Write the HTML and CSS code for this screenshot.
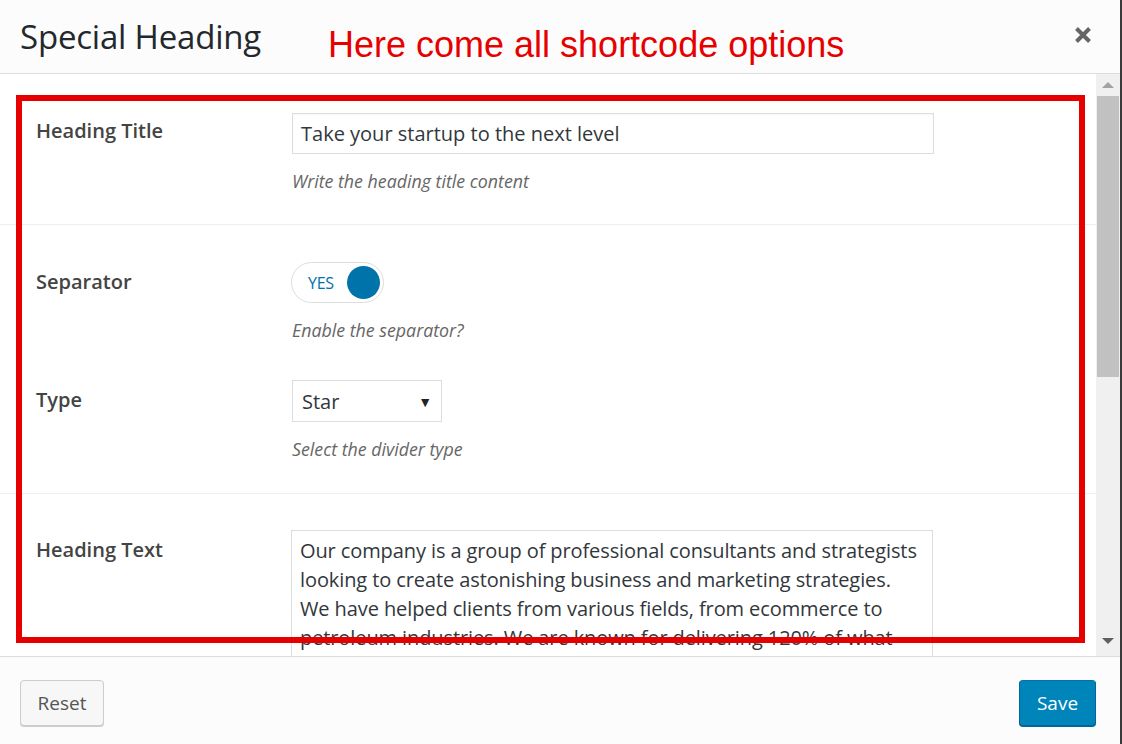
FILE: index.html
```html
<!DOCTYPE html>
<html>
<head>
<meta charset="utf-8">
<link rel="stylesheet" href="styles.css">
</head>
<body>
<div class="modal">
  <header class="modal-header">
    <h1 class="modal-title">Special Heading</h1>
    <span class="annotation-text">Here come all shortcode options</span>
    <button class="close-btn" aria-label="Close">
      <svg width="18" height="18" viewBox="0 0 18 18"><path d="M2.5 2.5 L15.5 15.5 M15.5 2.5 L2.5 15.5" stroke="#666" stroke-width="4" stroke-linecap="butt"/></svg>
    </button>
  </header>
  <div class="modal-body">
    <div class="content">
      <section class="section s1">
        <div class="field">
          <div class="field-label">Heading Title</div>
          <div class="field-control">
            <div class="text-input">Take your startup to the next level</div>
            <p class="desc">Write the heading title content</p>
          </div>
        </div>
      </section>
      <section class="section s2">
        <div class="field">
          <div class="field-label">Separator</div>
          <div class="field-control">
            <div class="toggle"><span class="toggle-text">YES</span><span class="toggle-knob"></span></div>
            <p class="desc">Enable the separator?</p>
          </div>
        </div>
        <div class="field field-type">
          <div class="field-label">Type</div>
          <div class="field-control">
            <div class="select"><span>Star</span><span class="select-arrow">&#9660;</span></div>
            <p class="desc">Select the divider type</p>
          </div>
        </div>
      </section>
      <section class="section s3">
        <div class="field">
          <div class="field-label">Heading Text</div>
          <div class="field-control">
            <div class="textarea">Our company is a group of professional consultants and strategists looking to create astonishing business and marketing strategies. We have helped clients from various fields, from ecommerce to petroleum industries. We are known for delivering 120% of what</div>
          </div>
        </div>
      </section>
    </div>
    <div class="scrollbar">
      <div class="sb-arrow sb-up"></div>
      <div class="sb-track"><div class="sb-thumb"></div></div>
      <div class="sb-arrow sb-down"></div>
    </div>
    <div class="annotation-box"></div>
  </div>
  <footer class="modal-footer">
    <button class="btn btn-reset">Reset</button>
    <button class="btn btn-save">Save</button>
  </footer>
</div>
</body>
</html>
```
FILE: styles.css
```css
* { box-sizing: border-box; }
html, body { margin: 0; padding: 0; }
body {
  background: #3a3a3a;
  font-family: "Open Sans", "Noto Sans", sans-serif;
  width: 1122px;
  height: 744px;
  overflow: hidden;
}
.modal {
  width: 1120px;
  height: 744px;
  background: #fff;
  display: flex;
  flex-direction: column;
}
.modal-header {
  height: 74px;
  flex: 0 0 74px;
  background: #fcfcfc;
  border-bottom: 1px solid #dddddd;
  display: flex;
  align-items: center;
  padding: 0 20px;
  position: relative;
}
.modal-title {
  margin: 0;
  font-size: 33px;
  font-weight: 400;
  color: #23282d;
  letter-spacing: -0.2px;
  line-height: 40px;
  margin-top: 0;
}
.annotation-text {
  position: absolute;
  left: 328px;
  top: 23px;
  font-family: "Liberation Sans", Arial, sans-serif;
  font-size: 36px;
  line-height: 44px;
  color: #e60000;
}
.close-btn {
  margin-left: auto;
  margin-right: 8px;
  margin-top: -4px;
  background: none;
  border: 0;
  padding: 0;
  width: 18px;
  height: 18px;
  display: flex;
}
.modal-body {
  flex: 1;
  display: flex;
  position: relative;
  overflow: hidden;
}
.content {
  flex: 1;
  overflow: hidden;
}
.section { border-bottom: 1px solid #eeeeee; }
.s1 { padding: 39px 0 32px; }
.s2 { padding: 37px 0 33px; }
.s3 { padding: 36px 0 0; border-bottom: 0; }
.field { display: flex; }
.field-type { margin-top: 39px; }
.field-label {
  width: 292px;
  padding-left: 36px;
  font-size: 20px;
  font-weight: 600;
  color: #444;
  line-height: 40px;
}
.s1 .field-label { line-height: 36px; }
.field-control { flex: 0 0 auto; }
.text-input {
  width: 642px;
  height: 41px;
  border: 1px solid #dddddd;
  padding: 0 8px;
  font-size: 20px;
  line-height: 40px;
  color: #32373c;
  box-shadow: inset 0 1px 2px rgba(0,0,0,0.04);
}
.desc {
  margin: 16px 0 0;
  font-size: 17.8px;
  line-height: 22px;
  font-style: italic;
  color: #666;
}
.toggle {
  width: 93px;
  height: 41px;
  margin-left: -1px;
  border: 1px solid #dddddd;
  border-radius: 21px;
  background: #fff;
  display: flex;
  align-items: center;
  padding: 0 3px 0 16px;
}
.toggle-text {
  font-size: 16px;
  color: #0073aa;
  letter-spacing: -0.3px;
}
.toggle-knob {
  margin-left: auto;
  width: 33px;
  height: 33px;
  border-radius: 50%;
  background: #0073aa;
}
.select {
  width: 150px;
  height: 42px;
  border: 1px solid #dddddd;
  display: flex;
  align-items: center;
  padding: 0 9px 0 9px;
  font-size: 20px;
  color: #32373c;
}
.select-arrow {
  margin-left: auto;
  font-size: 14px;
  color: #222;
}
.textarea {
  width: 642px;
  height: 220px;
  margin-left: -1px;
  border: 1px solid #dddddd;
  padding: 5px 8px;
  font-size: 20px;
  line-height: 29px;
  letter-spacing: -0.1px;
  color: #32373c;
}
.scrollbar {
  flex: 0 0 24px;
  background: #f0f0f0;
  display: flex;
  flex-direction: column;
  align-items: center;
}
.sb-arrow { width: 0; height: 0; flex: 0 0 auto; }
.sb-up {
  margin: 8px 0 8px;
  border-left: 6px solid transparent;
  border-right: 6px solid transparent;
  border-bottom: 6px solid #a3a3a3;
}
.sb-track { flex: 1; width: 100%; padding: 0 1px; }
.sb-thumb { height: 281px; background: #c1c1c1; }
.sb-down {
  margin: 8px 0 12px;
  border-left: 6px solid transparent;
  border-right: 6px solid transparent;
  border-top: 6px solid #606060;
}
.annotation-box {
  position: absolute;
  left: 16px;
  top: 21px;
  width: 1069px;
  height: 548px;
  border: 6px solid #e60000;
  pointer-events: none;
}
.modal-footer {
  flex: 0 0 88px;
  background: #fcfcfc;
  border-top: 1px solid #dddddd;
  display: flex;
  align-items: center;
  justify-content: space-between;
  padding: 0 24px 0 20px;
}
.btn {
  font-family: "Open Sans", "Noto Sans", sans-serif;
  height: 46px;
  border-radius: 4px;
  font-size: 19px;
  padding: 0;
  margin-top: 5px;
}
.btn-reset {
  width: 84px;
  background: #f7f7f7;
  border: 1px solid #cccccc;
  box-shadow: 0 1px 0 #cccccc;
  color: #555;
}
.btn-save {
  width: 77px;
  background: #0085ba;
  border: 1px solid #0073aa;
  border-color: #0073aa #006799 #006799;
  box-shadow: 0 1px 0 #006799;
  color: #fff;
}
```
